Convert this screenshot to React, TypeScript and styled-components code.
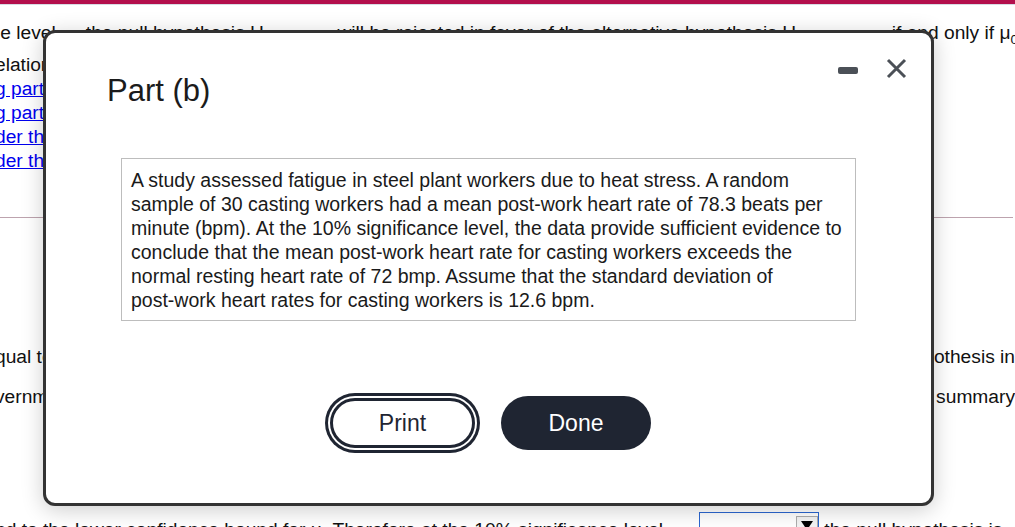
import React from "react"
import styled, { createGlobalStyle } from "styled-components"

const GlobalStyle = createGlobalStyle`
  html, body {
    margin: 0;
    padding: 0;
    background: #fff;
  }
  body {
    font-family: "Liberation Sans", Arial, sans-serif;
    overflow: hidden;
  }
`

const Page = styled.div`
  position: relative;
  width: 1015px;
  height: 527px;
  overflow: hidden;
  background: #fff;
  color: #111;
  font-size: 19.2px;
`

const TopBar = styled.div`
  height: 4px;
  background: #b30f4c;
  border-bottom: 1px solid #d6dbe3;
`

const Content = styled.div`
  width: 1020px;
  margin-left: -5px;
`

const Line = styled.div<{ $top?: number }>`
  display: flex;
  align-items: center;
  height: 24px;
  line-height: 24px;
  white-space: nowrap;
  margin-top: ${({ $top }) => ($top ? `${$top}px` : "0")};
`

const Blank = styled.span<{ $w: number }>`
  display: inline-block;
  width: ${({ $w }) => `${$w}px`};
`

const Sub = styled.sub`
  font-size: 0.7em;
  line-height: 0;
`

const RightText = styled.span<{ $overhang?: number }>`
  margin-left: auto;
  margin-right: ${({ $overhang }) => ($overhang ? `-${$overhang}px` : "0")};
  white-space: pre;
`

const Link = styled.a`
  color: #0000ee;
  text-decoration: underline;
  cursor: pointer;
`

const Rule = styled.hr`
  margin: 44px 0 0 5px;
  border: none;
  border-top: 1px solid #bda3ae;
  width: 1013px;
`

const BottomLine = styled.div`
  display: grid;
  grid-template-columns: 704px 120px 1fr;
  margin-top: 103px;
  white-space: nowrap;
`

const BottomText = styled.span`
  overflow: hidden;
  padding-top: 6px;
  line-height: 24px;
`

const SelectBox = styled.div`
  height: 30px;
  box-sizing: border-box;
  border: 1px solid #2b67d1;
  display: flex;
  justify-content: flex-end;
  padding: 3px 0 0;
`

const SelectArrow = styled.div`
  width: 22px;
  height: 26px;
  box-sizing: border-box;
  border: 1px solid #adadad;
  background: #f3f3f3;
  display: flex;
  justify-content: center;
  padding-top: 4px;
  &::after {
    content: "";
    width: 0;
    height: 0;
    border-left: 6px solid transparent;
    border-right: 6px solid transparent;
    border-top: 9px solid #000;
  }
`

const Modal = styled.div`
  position: absolute;
  left: 43px;
  top: 30px;
  width: 891px;
  height: 476px;
  box-sizing: border-box;
  border: 3px solid #333;
  border-radius: 12px;
  background: #fff;
  box-shadow: 0 4px 22px rgba(0, 0, 0, 0.2);
  display: flex;
  flex-direction: column;
`

const Header = styled.div`
  display: flex;
  justify-content: space-between;
  align-items: flex-start;
  padding: 0 24px 0 61px;
`

const Title = styled.h2`
  margin: 40px 0 0;
  font-size: 31px;
  font-weight: 400;
  color: #1b1b1b;
  line-height: normal;
`

const Controls = styled.div`
  display: flex;
  align-items: flex-start;
  gap: 28px;
  margin-top: 25px;
`

const MinButton = styled.button`
  width: 20px;
  height: 7px;
  margin-top: 9px;
  padding: 0;
  border: none;
  border-radius: 2px;
  background: #4b5057;
  cursor: pointer;
`

const CloseButton = styled.button`
  width: 21px;
  height: 21px;
  padding: 0;
  border: none;
  background: transparent;
  cursor: pointer;
  svg {
    display: block;
  }
`

const Passage = styled.div`
  margin: 49px auto 0;
  width: 735px;
  box-sizing: border-box;
  border: 1px solid #bdbdbd;
  padding: 9px 4px 8px 9px;
  font-size: 19.5px;
  line-height: 24px;
  color: #1a1a1a;
`

const NoBreak = styled.span`
  white-space: nowrap;
`

const Actions = styled.div`
  display: flex;
  justify-content: center;
  align-items: center;
  gap: 26px;
  margin-top: 75px;
  padding-left: 4px;
`

const PillButton = styled.button<{ $solid?: boolean }>`
  font-family: "Liberation Sans", Arial, sans-serif;
  font-size: 23px;
  border-radius: 30px;
  cursor: pointer;
  box-sizing: border-box;
  width: ${({ $solid }) => ($solid ? "150px" : "145px")};
  height: ${({ $solid }) => ($solid ? "54px" : "50px")};
  border: ${({ $solid }) => ($solid ? "none" : "3px solid #1f2532")};
  background: ${({ $solid }) => ($solid ? "#1f2532" : "#fff")};
  color: ${({ $solid }) => ($solid ? "#fff" : "#1f2532")};
  box-shadow: ${({ $solid }) =>
    $solid ? "none" : "0 0 0 2px #fff, 0 0 0 5px #1f2532"};
`

export default function App() {
  return (
    <>
      <GlobalStyle />
      <Page>
        <TopBar />
        <Content>
          <Line $top={16}>
            <span>&nbsp;e level</span>
            <Blank $w={30} />
            <span>
              the null hypothesis H<Sub>0</Sub>
            </span>
            <Blank $w={66} />
            <span>
              will be rejected in favor of the alternative hypothesis H
              <Sub>a</Sub>
            </span>
            <RightText $overhang={3}>
              if and only if μ<Sub>0</Sub>
            </RightText>
          </Line>
          <Line $top={8}>
            <span>elation</span>
          </Line>
          <Line>
            <Link>g part</Link>
          </Line>
          <Line>
            <Link>g part</Link>
          </Line>
          <Line>
            <Link>der th</Link>
          </Line>
          <Line>
            <Link>der th</Link>
          </Line>
          <Rule />
          <Line $top={127}>
            <span>qual to</span>
            <RightText>othesis in</RightText>
          </Line>
          <Line $top={16}>
            <span>vernm</span>
            <RightText> summary</RightText>
          </Line>
          <BottomLine>
            <BottomText>
              nd to the lower confidence bound for μ. Therefore at the 10% significance level
            </BottomText>
            <SelectBox>
              <SelectArrow />
            </SelectBox>
            <BottomText>&nbsp;the null hypothesis is</BottomText>
          </BottomLine>
        </Content>

        <Modal>
          <Header>
            <Title>Part (b)</Title>
            <Controls>
              <MinButton aria-label="Minimize" />
              <CloseButton aria-label="Close">
                <svg width="21" height="21" viewBox="0 0 21 21">
                  <path
                    d="M2 2 L19 19 M19 2 L2 19"
                    stroke="#4b5057"
                    strokeWidth="3"
                    fill="none"
                  />
                </svg>
              </CloseButton>
            </Controls>
          </Header>
          <Passage>
            A study assessed fatigue in steel plant workers due to heat stress. A
            random sample of 30 casting workers had a mean{" "}
            <NoBreak>post-work</NoBreak> heart rate of 78.3 beats per minute
            (bpm). At the 10% significance level, the data provide sufficient
            evidence to conclude that the mean <NoBreak>post-work</NoBreak> heart
            rate for casting workers exceeds the normal resting heart rate of 72
            bmp. Assume that the standard deviation of{" "}
            <NoBreak>post-work</NoBreak> heart rates for casting workers is 12.6
            bpm.
          </Passage>
          <Actions>
            <PillButton>Print</PillButton>
            <PillButton $solid>Done</PillButton>
          </Actions>
        </Modal>
      </Page>
    </>
  )
}
